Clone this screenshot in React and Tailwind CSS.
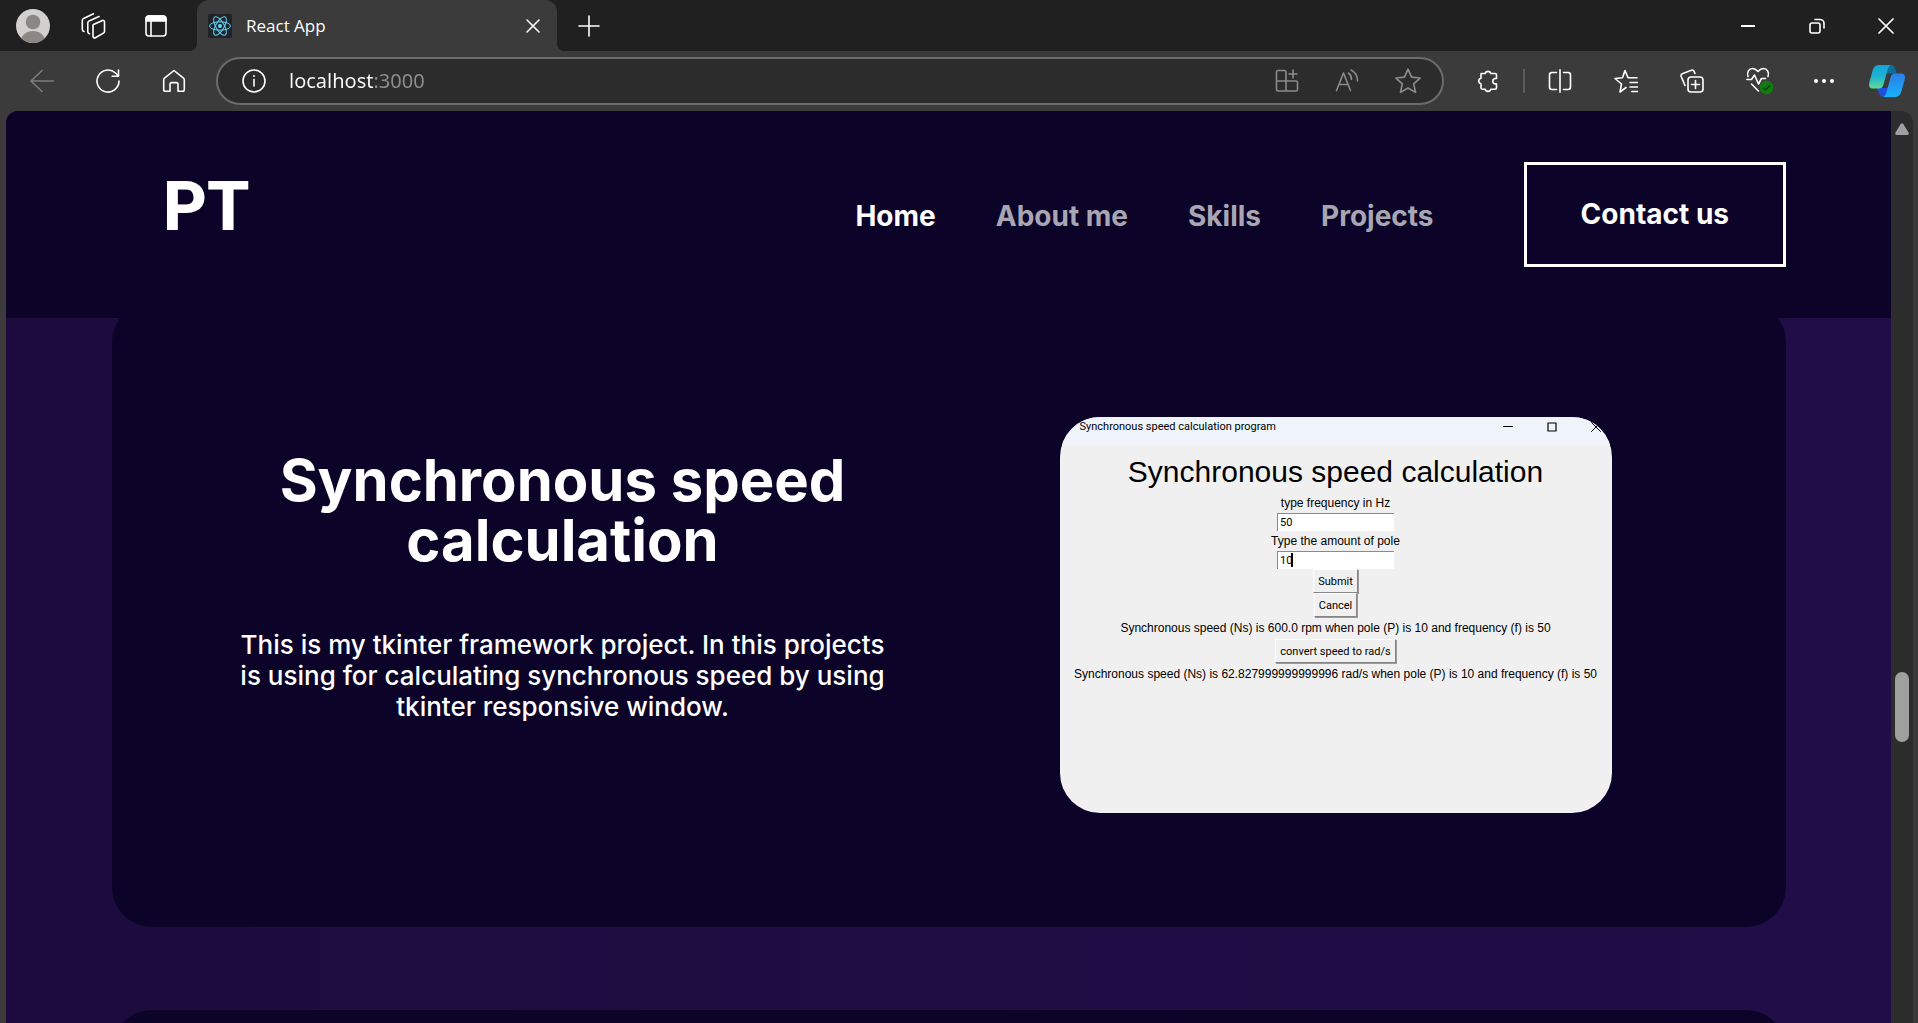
import React from 'react';

function Icon({ children, className = 'size-6', sw = 1.6, box = '0 0 24 24' }) {
  return (
    <svg viewBox={box} className={className} fill="none" stroke="currentColor" strokeWidth={sw} strokeLinecap="round" strokeLinejoin="round" aria-hidden="true">
      {children}
    </svg>
  );
}

function IconButton({ label, children, className = 'text-white' }) {
  return (
    <button type="button" aria-label={label} className={`flex shrink-0 items-center justify-center ${className}`}>
      {children}
    </button>
  );
}

function ReactLogo() {
  return (
    <svg viewBox="0 0 24 24" className="size-6 shrink-0 rounded-xs bg-[#20232a]" fill="none" stroke="#61dafb" strokeWidth="1" aria-hidden="true">
      <circle cx="12" cy="12" r="2" fill="#61dafb" stroke="none" />
      <ellipse cx="12" cy="12" rx="10.5" ry="4.2" />
      <ellipse cx="12" cy="12" rx="10.5" ry="4.2" transform="rotate(60 12 12)" />
      <ellipse cx="12" cy="12" rx="10.5" ry="4.2" transform="rotate(120 12 12)" />
    </svg>
  );
}

function TabBar() {
  return (
    <div className="flex h-[51px] shrink-0 items-center bg-[#202020]">
      <div className="flex w-[197px] shrink-0 items-center pl-4">
        <IconButton label="Profile">
          <svg viewBox="0 0 34 34" className="size-[34px]" aria-hidden="true">
            <defs>
              <clipPath id="avatar"><circle cx="17" cy="17" r="17" /></clipPath>
            </defs>
            <g clipPath="url(#avatar)">
              <rect width="34" height="34" fill="#d2d0ce" />
              <circle cx="17" cy="13" r="7.3" fill="#8b8785" />
              <ellipse cx="17" cy="33" rx="12.5" ry="11" fill="#8b8785" />
            </g>
          </svg>
        </IconButton>
        <IconButton label="Workspaces" className="ml-7 text-white">
          <Icon className="size-[30px]" box="0 0 30 30">
            <path d="M15.500 13.500 24.500 9.500c1-.4 2 .2 2 1.300v9.400c0 .8-.4 1.500-1.100 1.900l-8 4.600c-1.100.6-2.400-.1-2.400-1.400V14.800c0-.6.1-1 .5-1.300z" />
            <path d="M11.500 22.800c-1-.2-1.700-.8-1.700-2V12c0-1 .5-1.700 1.300-2.100L21 5.600" />
            <path d="M6 20.500c-1-.3-1.700-1-1.700-2.200V9.500c0-1 .5-1.700 1.300-2.100L15.500 2.800" />
          </Icon>
        </IconButton>
        <IconButton label="Tab actions" className="ml-9 text-white">
          <Icon className="size-6">
            <rect x="2" y="2" width="20" height="20" rx="3" />
            <path d="M2 7V5a3 3 0 0 1 3-3h14a3 3 0 0 1 3 3v2z" fill="currentColor" />
            <path d="M7 7v15" />
          </Icon>
        </IconButton>
      </div>
      <div className="relative flex h-full w-[360px] shrink-0 items-center rounded-t-xl bg-[#3b3b3b] pr-4 pl-[11px] text-white">
        <span className="absolute bottom-0 -left-2 size-2 bg-[radial-gradient(circle_at_0_0,#202020_8px,#3b3b3b_8px)]" />
        <span className="absolute -right-2 bottom-0 size-2 bg-[radial-gradient(circle_at_100%_0,#202020_8px,#3b3b3b_8px)]" />
        <ReactLogo />
        <span className="ml-[14px] flex-1 text-[17px]">React App</span>
        <IconButton label="Close tab">
          <Icon className="size-4" box="0 0 16 16"><path d="M2 2l12 12M14 2L2 14" /></Icon>
        </IconButton>
      </div>
      <IconButton label="New tab" className="ml-[21px] text-white">
        <Icon className="size-[22px]" box="0 0 22 22"><path d="M11 1v20M1 11h20" /></Icon>
      </IconButton>
      <div className="ml-auto flex items-center gap-[53px] pr-6 text-white">
        <IconButton label="Minimize">
          <Icon className="size-4" box="0 0 16 16" sw={2}><path d="M1 8h14" strokeLinecap="butt" /></Icon>
        </IconButton>
        <IconButton label="Restore">
          <Icon className="size-4" box="0 0 16 16" sw={1.6}>
            <rect x="1" y="5" width="10" height="10" rx="2" />
            <path d="M6 1.500h5a4 4 0 0 1 4 4V10" />
          </Icon>
        </IconButton>
        <IconButton label="Close">
          <Icon className="size-4" box="0 0 16 16" sw={1.700}><path d="M1 1l14 14M15 1L1 15" /></Icon>
        </IconButton>
      </div>
    </div>
  );
}

function CopilotLogo() {
  return (
    <svg viewBox="0 0 36 32" className="h-8 w-9" aria-hidden="true">
      <defs>
        <linearGradient id="cpA" x1="0" y1="0" x2="0" y2="1">
          <stop offset="0" stopColor="#10a5dc" /><stop offset=".5" stopColor="#1fb3d0" /><stop offset="1" stopColor="#5fdc92" />
        </linearGradient>
        <linearGradient id="cpB" x1="0" y1="0" x2="0" y2="1">
          <stop offset="0" stopColor="#2b7de9" /><stop offset="1" stopColor="#17b1fa" />
        </linearGradient>
        <linearGradient id="cpC" x1="0" y1="0" x2="1" y2="0">
          <stop offset="0" stopColor="#2150d8" /><stop offset="1" stopColor="#1f4fe6" />
        </linearGradient>
      </defs>
      <path d="M17 0h5c2.500 0 3.500 1.500 4.200 4l1.300 4.500H18z" fill="#0a6f9c" />
      <path d="M8 23h11l-3 9c-3 0-5-1-6-4z" fill="url(#cpC)" />
      <path d="M10.500 0H22c-1.800.8-2.800 2.600-3.500 5l-4 14.500c-.8 2.800-2 4-4.500 4H3.500C.5 23.500-.5 21 .3 17.500L3.800 5C4.800 1.500 7 0 10.500 0z" fill="url(#cpA)" />
      <path d="M25.500 32H14c1.800-.8 2.800-2.600 3.500-5l4-14.500c.8-2.800 2-4 4.500-4h6.500c3 0 4 2.500 3.200 6L32.200 27c-1 3.500-3.200 5-6.700 5z" fill="url(#cpB)" />
    </svg>
  );
}

const STAR = 'M12 2l3 6.700 7.200.8-5.400 4.900 1.600 7.200-6.400-3.700-6.400 3.700 1.600-7.200L1.800 9.500 9 8.700z';

function Toolbar() {
  return (
    <div className="flex h-[60px] shrink-0 items-center bg-[#3b3b3b] pr-[13px] pl-[30px]">
      <IconButton label="Back" className="text-[#7c7c7c]">
        <Icon><path d="M12 1.500L1 12l11 10.500M1 12h22.500" /></Icon>
      </IconButton>
      <IconButton label="Refresh" className="ml-[42px] text-white">
        <Icon><path d="M23 12a11 11 0 1 1-3.500-8L22.500 7M22.500 1v6.200h-6.300" /></Icon>
      </IconButton>
      <IconButton label="Home" className="ml-[42px] text-white">
        <Icon><path d="M12 1.500 2.500 9.200c-.5.4-.8 1-.8 1.700v9.600c0 1 .8 1.800 1.800 1.800H8v-7c0-1 .7-1.700 1.700-1.700h4.600c1 0 1.700.7 1.700 1.700v7h4.500c1 0 1.800-.8 1.800-1.800v-9.600c0-.7-.3-1.300-.8-1.700z" /></Icon>
      </IconButton>
      <form className="ml-[30px] flex h-12 flex-1 items-center rounded-full border-2 border-[#6c6c6c] bg-[#2c2c2c] pr-[21px] pl-6" onSubmit={(e) => e.preventDefault()}>
        <IconButton label="View site information">
          <Icon><circle cx="12" cy="12" r="11" /><path d="M12 10.500v6.500" /><circle cx="12" cy="7" r="1" fill="currentColor" stroke="none" /></Icon>
        </IconButton>
        <input
          aria-label="Address"
          defaultValue="localhost:3000"
          className="ml-[23px] min-w-0 flex-1 bg-linear-to-r from-white from-[85px] to-[#8f8f8f] to-[85px] bg-clip-text font-[Noto_Sans,sans-serif] text-[20px] text-transparent outline-none"
        />
        <div className="flex items-center gap-9 text-[#8b8b8b]">
          <IconButton label="Available apps" className="text-inherit">
            <Icon><path d="M3 1.500h6.500a1.500 1.500 0 0 1 1.500 1.500v19H3A1.500 1.500 0 0 1 1.500 20.500V3A1.500 1.500 0 0 1 3 1.500zM1.500 12H21a1.500 1.500 0 0 1 1.500 1.500v7a1.500 1.500 0 0 1-1.500 1.500H11M18 1v8M14 5h8" /></Icon>
          </IconButton>
          <IconButton label="Read aloud" className="text-inherit">
            <Icon><path d="M1.500 21.500 8.500 4l7 17.500M4 15.500h9M13.500 4c2 1.500 3 4 3 6.500M16 1c4 2 6.500 6.500 6.500 11" /></Icon>
          </IconButton>
          <IconButton label="Add to favorites" className="text-inherit">
            <Icon box="1 1 22 22" className="size-[26px]" sw={1.4}><path d={STAR} /></Icon>
          </IconButton>
        </div>
      </form>
      <div className="ml-8 flex items-center gap-[42px] text-white">
        <div className="flex items-center gap-[23px]">
          <IconButton label="Extensions">
            <Icon>
              <path d="M5.500 4.500h3.700a2.900 2.900 0 0 1 5.600 0h4.200a1.500 1.500 0 0 1 1.500 1.500v3.500h-1a2.700 2.700 0 0 0 0 5.400h1v3.800a1.500 1.500 0 0 1-1.500 1.500h-4.200a2.900 2.900 0 0 1-5.600 0H6.500A1.500 1.500 0 0 1 5 18.700v-3.900a2.800 2.800 0 0 1 0-5.500V5a.5.500 0 0 1 .5-.5z" />
            </Icon>
          </IconButton>
          <span className="h-6 w-0.5 bg-[#5a5a5a]" />
          <IconButton label="Split screen">
            <Icon><path d="M8.500 3.500H4A2.500 2.500 0 0 0 1.500 6v12A2.500 2.500 0 0 0 4 20.500h4.500M15.500 3.500H20A2.500 2.500 0 0 1 22.500 6v12a2.500 2.500 0 0 1-2.500 2.500h-4.500M12 .8v22.400" /></Icon>
          </IconButton>
        </div>
        <IconButton label="Favorites">
          <Icon><path d="M12 18.500 6 23l1.500-8L1 9.500l7.500-.8L11 1.500l3 7.200h9M16 13.500h7.500M16 18h7.500M17.500 22.500h6" /></Icon>
        </IconButton>
        <IconButton label="Collections">
          <Icon><path d="M5 16.500 1.200 7.500C.8 6.400 1.200 5.300 2.300 4.800l9-3.600c1.200-.5 2.300 0 2.800 1.200l.8 2" /><rect x="8" y="8" width="15" height="15" rx="3" /><path d="M15.500 11.500v8M11.500 15.500h8" /></Icon>
        </IconButton>
        <IconButton label="Browser essentials">
          <Icon className="h-[28px] w-[28px] -mr-1" box="0 0 28 28">
            <path d="M2 9.500C.5 5 3 1.500 6.500 1.500c2.500 0 4 1.300 5.500 3 1.500-1.700 3-3 5.500-3 3.500 0 6 3.500 4.500 8" />
            <path d="M.8 12.500h4.700l3-4.500 4 9 3-5.500h4M5.500 17l7 7" />
            <circle cx="20.500" cy="20.500" r="6.800" fill="#107c10" stroke="none" />
            <path d="M17.500 21l2 2 4.200-4.500" stroke="#0a3a0a" strokeWidth="1.400" />
          </Icon>
        </IconButton>
        <IconButton label="Settings and more">
          <Icon><g fill="currentColor" stroke="none"><circle cx="4" cy="12" r="2" /><circle cx="12" cy="12" r="2" /><circle cx="20" cy="12" r="2" /></g></Icon>
        </IconButton>
        <button type="button" aria-label="Copilot" className="-ml-[9px]"><CopilotLogo /></button>
      </div>
    </div>
  );
}

const LINKS = ['Home', 'About me', 'Skills', 'Projects'];

function SiteHeader() {
  return (
    <header className="relative z-10 flex items-center bg-[#0b0428] py-[51px] pr-[105px] pl-[157px] font-[Inter,sans-serif] font-bold">
      <a href="#home" className="mr-auto pb-4 font-[Roboto,sans-serif] text-[68px] leading-none font-extrabold text-white">PT</a>
      <nav className="flex gap-[60px] pt-0.5 text-[28px]">
        {LINKS.map((l, i) => (
          <a key={l} href={`#${l}`} className={i === 0 ? 'text-white' : 'text-[#a9a6b3]'}>{l}</a>
        ))}
      </nav>
      <button type="button" className="ml-[90px] border-3 border-white px-[54px] py-[29px] text-[28px] leading-[41px] text-white">Contact us</button>
    </header>
  );
}

function TkButton({ children }) {
  return (
    <button type="button" className="h-6 border border-t-white border-r-[#858585] border-b-[#858585] border-l-white px-1 font-[Roboto,sans-serif] text-[11px] leading-none shadow-[1px_1px_0_#9a9a9a]">
      {children}
    </button>
  );
}

function TkField({ label, id, value, focused }) {
  return (
    <>
      <label htmlFor={id} className="font-[Liberation_Sans,Arial,sans-serif] text-[12px] leading-5">{label}</label>
      <div className="relative flex">
        <input id={id} defaultValue={value} className="h-[18px] w-[117px] border-t border-l border-[#8a8a8a] bg-white pl-0.5 font-[Roboto,sans-serif] text-[11px] leading-none outline-none" />
        {focused && <span className="absolute top-0.5 left-3.5 h-[14px] w-0.5 bg-black" />}
      </div>
    </>
  );
}

function TkWindow() {
  return (
    <div className="flex h-[396px] w-[552px] flex-col overflow-hidden rounded-[40px] bg-[#f0f0f0] text-black">
      <div className="flex h-7 items-start bg-[#eff3fa] pt-[2px] pr-[11px] pl-5">
        <span className="flex-1 font-[Roboto,sans-serif] text-[11px] leading-4">Synchronous speed calculation program</span>
        <div className="flex items-center gap-[34px] pt-[3px]">
          <Icon className="size-[10px]" box="0 0 10 10" sw={1}><path d="M0 4.500h10" /></Icon>
          <Icon className="size-[10px]" box="0 0 10 10" sw={1.200}><rect x="1" y="1" width="8" height="8" /></Icon>
          <Icon className="size-[10px]" box="0 0 10 10" sw={1}><path d="M.5.5l9 9M9.500.5l-9 9" /></Icon>
        </div>
      </div>
      <div className="flex flex-col items-center pt-[7px]">
        <h3 className="mb-px font-[Liberation_Sans,Arial,sans-serif] text-[30px] leading-[40px]">Synchronous speed calculation</h3>
        <TkField id="freq" label="type frequency in Hz" value="50" />
        <TkField id="pole" label="Type the amount of pole" value="10" focused />
        <TkButton>Submit</TkButton>
        <TkButton>Cancel</TkButton>
        <p className="font-[Liberation_Sans,Arial,sans-serif] text-[12px] leading-[22px]">Synchronous speed (Ns) is 600.0 rpm when pole (P) is 10 and frequency (f) is 50</p>
        <TkButton>convert speed to rad/s</TkButton>
        <p className="font-[Liberation_Sans,Arial,sans-serif] text-[12px] leading-[22px]">Synchronous speed (Ns) is 62.827999999999996 rad/s when pole (P) is 10 and frequency (f) is 50</p>
      </div>
    </div>
  );
}

function ProjectCard() {
  return (
    <article className="grid shrink-0 grid-cols-2 rounded-[40px] bg-[#0b0428] px-16 pt-[115px] pb-[114px]">
      <div className="px-[58px] pt-[33px] text-center font-[Inter,sans-serif] text-white">
        <h2 className="mb-[59px] text-[58px] leading-[60px] font-bold">Synchronous speed calculation</h2>
        <p className="text-[26px] leading-[31px] font-medium">
          This is my tkinter framework project. In this projects is using for calculating synchronous speed by using tkinter responsive window.
        </p>
      </div>
      <div className="flex items-start justify-center">
        <TkWindow />
      </div>
    </article>
  );
}

export default function App() {
  return (
    <div className="flex h-screen flex-col overflow-hidden bg-[#3b3b3b] font-[Open_Sans,sans-serif]">
      <TabBar />
      <Toolbar />
      <div className="mr-[5px] ml-[6px] flex min-h-0 flex-1 overflow-hidden rounded-t-xl">
        <main className="flex flex-1 flex-col overflow-hidden bg-linear-to-r from-[#1d0b3e] to-[#210e48]">
          <SiteHeader />
          <section className="-mt-4 flex flex-col gap-[83px] pr-[105px] pl-[106px]">
            <ProjectCard />
            <article className="h-40 shrink-0 rounded-[40px] bg-[#0b0428]" />
          </section>
        </main>
        <div className="flex w-[22px] flex-col items-center bg-[#2c2c2c] pt-3">
          <svg viewBox="0 0 14 12" className="h-3 w-[14px] fill-[#9f9f9f]" aria-hidden="true"><path d="M5.500 1.200c.8-1.200 2.200-1.200 3 0l5 8.300c.8 1.200 0 2.500-1.300 2.500H1.800C.5 12-.3 10.700.5 9.500z" /></svg>
          <span className="mt-[537px] h-[70px] w-[14px] rounded-full bg-[#9f9f9f]" />
        </div>
      </div>
    </div>
  );
}
